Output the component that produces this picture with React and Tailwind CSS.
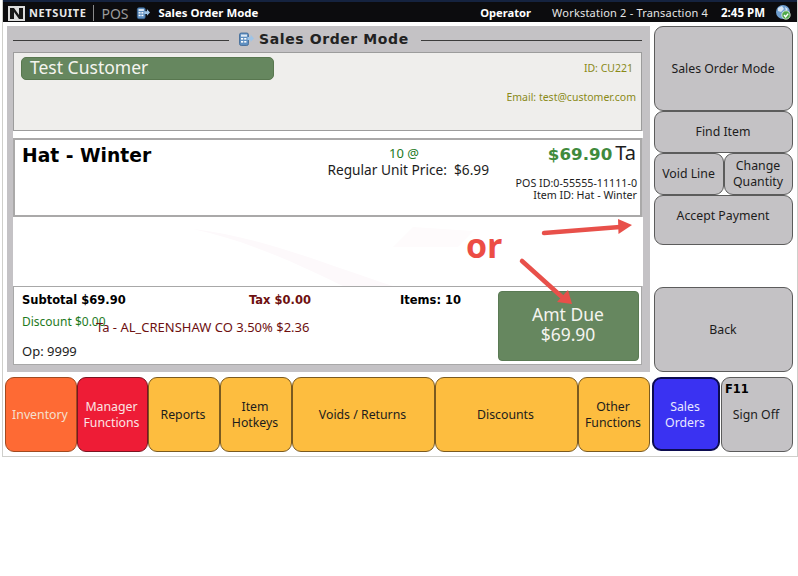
function GlobeIcon() {
  return (
    <svg width="17" height="17" viewBox="0 0 17 17">
      <circle cx="8" cy="8" r="7" fill="#6f9fd0" />
      <path d="M3 4 L7 2 L9 5 L6 8 L3 7 Z M10 3 L13 5 L11 7 Z" fill="#d8e6f2" />
      <circle cx="11" cy="11" r="4.2" fill="#4fa84a" stroke="#e8f2e6" strokeWidth="0.8" />
      <path d="M9 11 L10.6 12.8 L13.2 9.6" fill="none" stroke="#fff" strokeWidth="1.4" />
    </svg>
  );
}

function ModeIcon({ size = 14 }) {
  return (
    <svg width={size} height={size} viewBox="0 0 16 16">
      <rect x="1.5" y="2" width="9" height="12.5" rx="1.8" fill="#5f8fc0" stroke="#3a6694" strokeWidth="0.8" />
      <rect x="3" y="3.5" width="6" height="2.2" fill="#dfeaf5" />
      <rect x="3" y="7" width="2.2" height="1.6" fill="#fff" />
      <rect x="6.2" y="7" width="2.2" height="1.6" fill="#fff" />
      <rect x="3" y="10" width="2.2" height="1.6" fill="#fff" />
      <rect x="6.2" y="10" width="2.2" height="1.6" fill="#fff" />
      <path d="M9.5 6 H12.5 V3.5 L16 7.5 L12.5 11 V9 H9.5 Z" fill="#9fc4e6" />
    </svg>
  );
}

function NetSuiteLogo() {
  return (
    <svg width="17" height="15" viewBox="0 0 17 15">
      <rect width="17" height="15" fill="#dcdcdc" />
      <path d="M2 2 H6 L11 9 V2 H15 V13 H11 L6 6 V13 H2 Z" fill="#161616" />
    </svg>
  );
}

function Key({ className = "", children }) {
  return (
    <div
      className={`flex items-center justify-center text-center rounded-[9px] border border-[#5c5c5c] bg-[#c4c2c5] text-[#1c1c1c] text-[12.3px] leading-[16px] pr-px ${className}`}
    >
      {children}
    </div>
  );
}

function Tab({ className = "", children }) {
  return (
    <div
      className={`flex items-center justify-center text-center h-[75px] rounded-[9px] border text-[12.3px] leading-[16px] pr-[2px] ${className}`}
    >
      {children}
    </div>
  );
}

const amber = "bg-[#fdbd3f] border-[#7a5a20] text-[#1c1c1c]";
const dejavu = { fontFamily: '"DejaVu Sans", sans-serif' };

export default function App() {
  return (
    <div
      className="relative w-[798px] h-[576px] bg-white overflow-hidden"
      style={{ fontFamily: '"Noto Sans", "DejaVu Sans", sans-serif' }}
    >
      <div className="ml-[2px] h-[457px] border-l border-r border-b border-[#cfcfcb] bg-white">
        <div className="h-[22px] bg-[#0c0c0e] border-t-2 border-[#15233f] flex items-center pt-[2px] pl-[5px] pr-[5px] text-white">
          <NetSuiteLogo />
          <span className="ml-[4px] text-[11px] font-bold tracking-[0.6px] text-[#e8e8e8]">NETSUITE</span>
          <span className="ml-[7px] w-px h-[16px] bg-[#8a8a8a]" />
          <span className="ml-[7px] text-[14px] text-[#9a9a9a]">POS</span>
          <span className="ml-[7px]"><ModeIcon size={14} /></span>
          <span className="ml-[9px] text-[11.4px] font-bold">Sales Order Mode</span>
          <span className="ml-auto text-[11.2px] font-bold">Operator</span>
          <span className="ml-[21px] text-[11px] text-[#e6e6e6] tracking-[0.2px]">Workstation 2 - Transaction 4</span>
          <span className="ml-[13px] text-[11.5px] font-bold">2:45 PM</span>
          <span className="ml-[10px] -mt-[2px]"><GlobeIcon /></span>
        </div>

        <div className="flex pl-[4px] pt-[4px] gap-[4px]">
          <div className="w-[643px] h-[346px] bg-[#c4c2c5] pl-[6px] pr-[8px] pt-[2px] flex flex-col">
            <div className="h-[24px] flex items-center">
              <div className="w-[216px] h-px bg-[#3c3c3c]" />
              <div className="flex items-center pl-[9px] pr-[12px] gap-[5px] -mt-[2px]">
                <ModeIcon size={16} />
                <span className="text-[14px] font-bold tracking-[0.6px] text-[#222]" style={dejavu}>
                  Sales Order Mode
                </span>
              </div>
              <div className="flex-1 h-px bg-[#3c3c3c]" />
            </div>

            <div className="h-[79px] border border-[#9c9c9c] bg-[#efeeec] pl-[7px] pr-[5px] pt-[4px] flex">
              <div className="w-[253px] h-[23px] rounded-[5px] bg-[#66875f] border border-[#58774f] text-[#f4f4ef] text-[17.5px] leading-[19px] pl-[8px]">
                Test Customer
              </div>
              <div className="ml-auto flex flex-col items-end text-[10.5px] text-[#8a8a18] pt-[4px]">
                <span className="mr-[3px] leading-[14px]">ID: CU221</span>
                <span className="mt-[15px] leading-[14px]">Email: test@customer.com</span>
              </div>
            </div>

            <div className="w-[630px] h-[7px] bg-white" />

            <div className="h-[79px] border-[2.5px] border-[#aaa9a9] bg-white relative flex pl-[7px] pr-[3px]">
              <span className="text-[18.7px] leading-[26px] font-bold text-black mt-[3px]" style={dejavu}>
                Hat - Winter
              </span>
              <div className="ml-auto flex flex-col items-end w-[320px]">
                <div className="flex w-full">
                  <div className="w-[172px] flex flex-col items-end">
                    <div className="text-[13px] leading-[14px] text-[#1e7a1e] mt-[6px] mr-[70px]">10 @</div>
                    <div className="text-[13.7px] leading-[20px] text-[#1c1c1c] whitespace-nowrap">Regular Unit Price:&nbsp; $6.99</div>
                  </div>
                  <div className="ml-auto flex items-baseline mt-[2px] h-[24px] pr-px">
                    <span className="text-[16.7px] font-bold text-[#3f8a3c]" style={dejavu}>
                      $69.90
                    </span>
                    <span className="ml-[3px] text-[20px] leading-[20px] text-[#1c1c1c]">Ta</span>
                  </div>
                </div>
                <div className="text-[10.7px] leading-[12px] text-[#1c1c1c] text-right -mt-[3px]">
                  <div>POS ID:0-55555-11111-0</div>
                  <div>Item ID: Hat - Winter</div>
                </div>
              </div>
            </div>

            <div className="h-[69px] bg-white -mr-px relative overflow-hidden">
              <svg width="630" height="69" className="absolute left-0 top-0">
                <path d="M180 12 C 250 20, 320 50, 380 69 L 330 69 C 290 50, 240 25, 180 12 Z" fill="#fdf9fb" />
                <path d="M380 30 L 400 10 L 460 14 L 445 30 Z" fill="#fefbfc" />
              </svg>
            </div>

            <div className="h-[79px] w-[629px] border border-[#a8a8a8] bg-white flex pl-[8px] pr-[2px] relative">
              <div className="flex-1 relative">
                <div className="flex">
                  <span className="w-[227px] text-[11.5px] leading-[14px] font-bold text-black mt-[6px]" style={dejavu}>
                    Subtotal $69.90
                  </span>
                  <span className="w-[151px] text-[11.5px] leading-[14px] font-bold text-[#6e1010] mt-[6px]" style={dejavu}>
                    Tax $0.00
                  </span>
                  <span className="text-[11.5px] leading-[14px] font-bold text-black mt-[6px]" style={dejavu}>
                    Items: 10
                  </span>
                </div>
                <div className="text-[12px] leading-[14px] text-[#1e7a1e] mt-[8px]">Discount $0.00</div>
                <div className="text-[13px] leading-[14px] text-[#1c1c1c] mt-[15px]">Op: 9999</div>
                <div className="absolute left-[74px] top-[33px] text-[13px] leading-[14px] text-[#6e1010] whitespace-nowrap">
                  Ta - AL_CRENSHAW CO 3.50% $2.36
                </div>
              </div>
              <div className="w-[141px] h-[70px] mt-[4px] rounded-[4px] bg-[#66875f] border border-[#5a7a54] text-[#f4f4ef] flex flex-col items-center justify-center text-[17.5px] leading-[20px] pb-[4px] pr-px">
                <span>Amt Due</span>
                <span>$69.90</span>
              </div>
            </div>
          </div>

          <div className="w-[139px] flex flex-col">
            <Key className="h-[85px]">Sales Order Mode</Key>
            <Key className="h-[42px]">Find Item</Key>
            <div className="flex h-[42px]">
              <Key className="w-[70px]">Void Line</Key>
              <Key className="w-[69px]">Change<br />Quantity</Key>
            </div>
            <Key className="h-[50px] !items-start pt-[12px]">Accept Payment</Key>
            <Key className="h-[85px] mt-[42px]">Back</Key>
          </div>
        </div>

        <div className="flex mt-[5px] pl-[2px]">
          <Tab className="w-[72px] bg-[#fe6a34] border-[#a04a20] text-[#f5e0d0]">Inventory</Tab>
          <Tab className="w-[71px] bg-[#ee1c36] border-[#7a1420] text-[#fbe5e5]">Manager<br />Functions</Tab>
          <Tab className={`w-[72px] ${amber}`}>Reports</Tab>
          <Tab className={`w-[72px] ${amber}`}>Item<br />Hotkeys</Tab>
          <Tab className={`w-[143px] ${amber}`}>Voids / Returns</Tab>
          <Tab className={`w-[143px] ${amber}`}>Discounts</Tab>
          <Tab className={`w-[72px] ${amber}`}>Other<br />Functions</Tab>
          <Tab className="w-[68px] ml-[2px] !h-[74px] pt-[2px] bg-[#3a32f2] border-2 border-[#0c0c50] text-[#e8e8ff]">Sales<br />Orders</Tab>
          <Tab className="w-[72px] ml-[1px] bg-[#c4c2c5] border-[#5c5c5c] text-[#1c1c1c] relative">
            <span className="absolute left-[3px] top-[3px] text-[11.5px] leading-[16px] font-bold text-black" style={dejavu}>
              F11
            </span>
            Sign Off
          </Tab>
        </div>
      </div>

      <span
        className="absolute left-[466px] top-[223px] text-[34px] leading-[44px] font-bold text-[#ec4d45]"
        style={{ fontFamily: '"Open Sans", sans-serif' }}
      >
        or
      </span>
      <svg width="798" height="576" className="absolute left-0 top-0 pointer-events-none">
        <path d="M544 233 L620 227" stroke="#e8504a" strokeWidth="4.5" strokeLinecap="round" />
        <path d="M618 219 L632 225 L618.5 234 Z" fill="#e8504a" />
        <path d="M522 261 L562 297" stroke="#e8504a" strokeWidth="4.5" strokeLinecap="round" />
        <path d="M568 290 L572 304 L557 302 Z" fill="#e8504a" />
      </svg>
    </div>
  );
}
